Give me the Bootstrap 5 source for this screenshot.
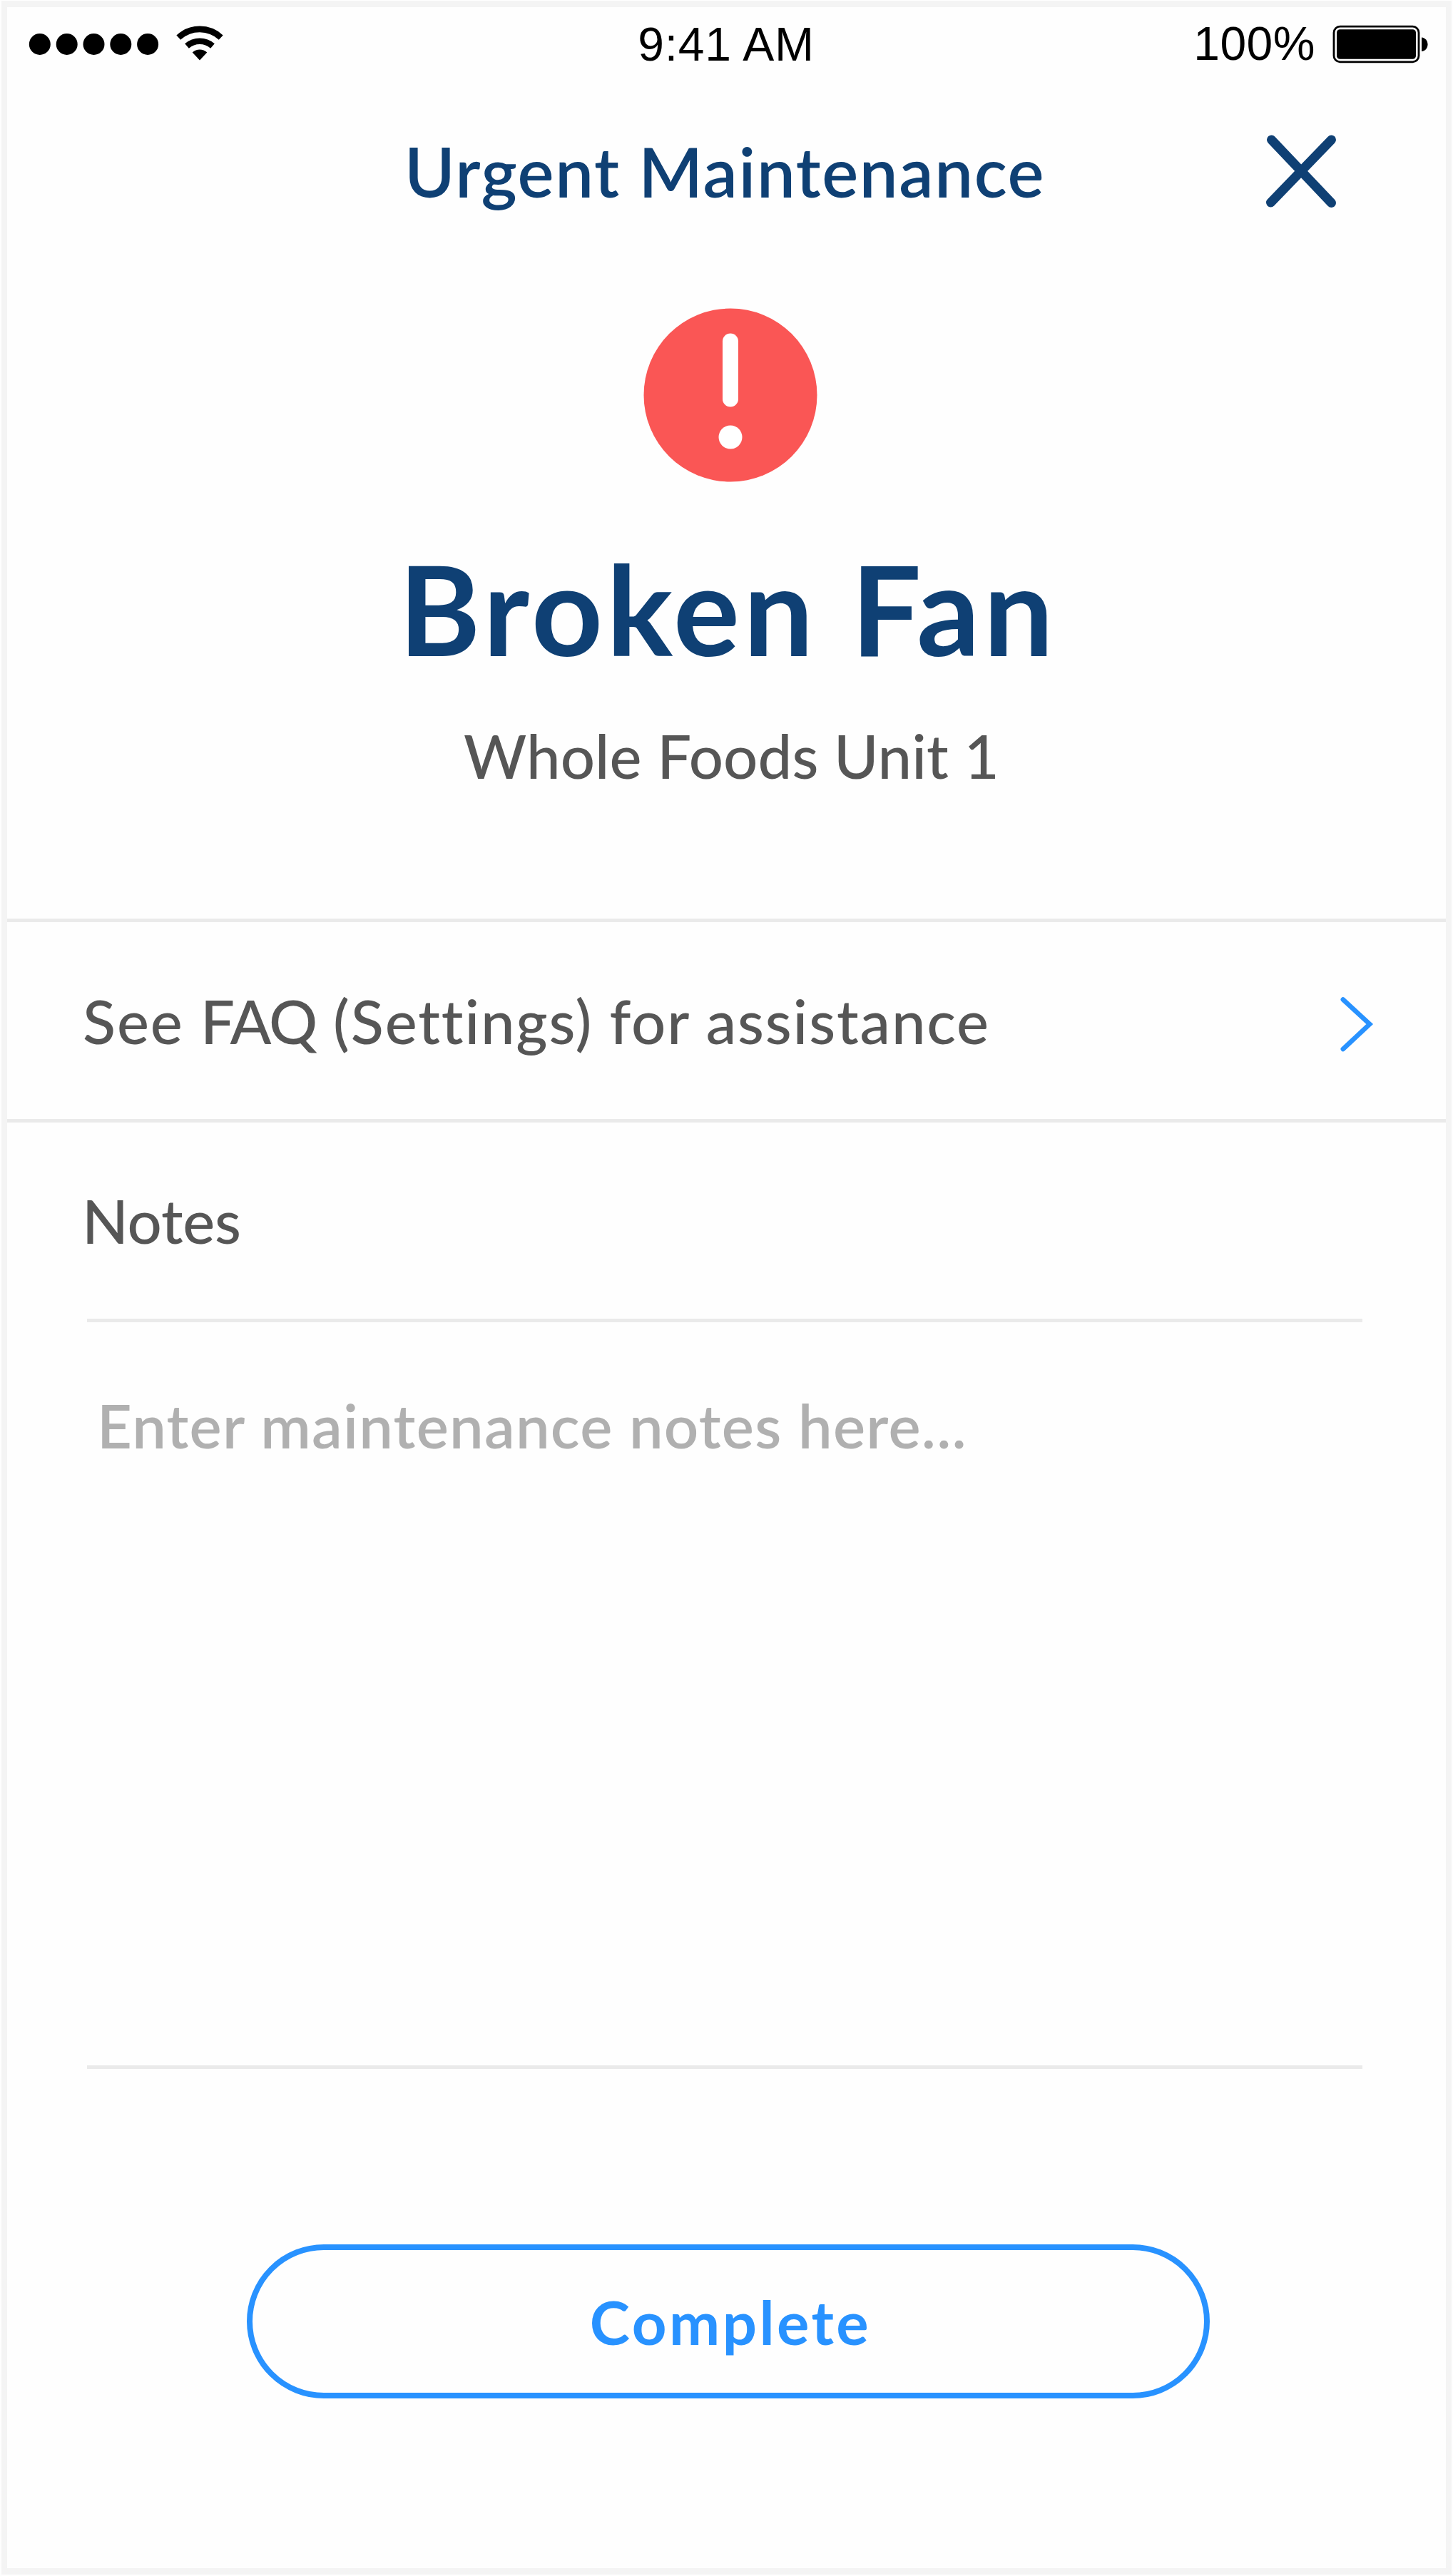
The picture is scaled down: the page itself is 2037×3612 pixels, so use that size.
<!DOCTYPE html>
<html lang="en">
<head>
<meta charset="utf-8">
<meta name="viewport" content="width=device-width, initial-scale=1">
<title>Urgent Maintenance</title>
<link href="https://cdn.jsdelivr.net/npm/bootstrap@5.3.0/dist/css/bootstrap.min.css" rel="stylesheet">
<style>
  :root { --navy: #0f4074; --blue: #2892ff; --ink: #565656; --rule: #eaeaea; }
  html, body { height: 3612px; overflow: hidden; }
  body { font-family: Lato, "Open Sans", sans-serif; font-weight: 500; background: #fefefe; padding: 1px 2px 2px; color: var(--ink); }
  .screen { height: 3609px; border: solid #f4f4f4; border-width: 9px 8px; }
  .status { height: 104px; font: 66px/104px "Liberation Sans", sans-serif; color: #000; padding: 0 25px 0 30px; }
  .status .col { flex: 1 1 0; }
  .clock { letter-spacing: .8px; margin-right: 6px; }
  .charge { letter-spacing: .5px; margin-top: -3px; }
  .titlebar { height: 250px; color: var(--navy); padding: 0 151px 0 557px; }
  .titlebar h1 { font-size: 96px; font-weight: 600; line-height: 120px; letter-spacing: 1.65px; padding-top: 1px; }
  .hero { height: 924px; padding-top: 68px; }
  .hero svg { margin-left: 892px; }
  .hero h2 { font-size: 174px; font-weight: 700; line-height: 210px; letter-spacing: 5.3px; color: var(--navy); margin-top: 72px; padding-left: 549px; }
  .hero p { font-size: 85px; line-height: 100px; letter-spacing: .1px; margin-top: 51px; padding-left: 640px; }
  .faq { height: 286px; border: solid var(--rule); border-width: 5px 0; font-size: 85px; line-height: 100px; letter-spacing: 1.85px; color: var(--ink); padding: 0 100px 0 106px; }
  .faq svg { margin-top: 10px; }
  .faq abbr { letter-spacing: -1.6px; text-decoration: none; }
  .notes { padding: 0 117px 0 112px; }
  .notes label { height: 275px; font-size: 85px; line-height: 275px; letter-spacing: -.2px; margin-left: -7px; }
  .notes textarea { height: 1052px; border: solid var(--rule); border-width: 5px 0; border-radius: 0; background: none; resize: none; padding: 94px 0 0 14px; font-size: 85px; line-height: 100px; font-weight: 600; letter-spacing: 1.25px; overflow: hidden; }
  .notes textarea::placeholder { color: #b0b0b0; opacity: 1; }
  .btn-complete { width: 1350px; height: 216px; margin: 246px 0 0 336px; border: 8px solid var(--blue); color: var(--blue); font-size: 85px; line-height: 100px; font-weight: 700; letter-spacing: 3.5px; padding: 0 0 0 6px; }
</style>
<script src="https://cdn.jsdelivr.net/npm/bootstrap@5.3.0/dist/js/bootstrap.bundle.min.js"></script>
</head>
<body>
<main class="screen d-flex flex-column">
  <header class="status d-flex align-items-center">
    <div class="col d-flex align-items-center">
      <svg width="290" height="60" viewBox="40 31 290 60">
        <circle cx="55.8" cy="61" r="15"/><circle cx="93.7" cy="61" r="15"/><circle cx="131.5" cy="61" r="15"/><circle cx="169.3" cy="61" r="15"/><circle cx="207.1" cy="61" r="15"/>
        <g fill="none" stroke="#000" stroke-width="8.6"><path d="M250.300 51.600A43.500 43.500 0 0 1 309.700 51.600"/><path d="M262 63.500A27.500 27.500 0 0 1 298 63.500"/></g>
        <path d="M269.700 72.500A15.500 15.500 0 0 1 290.300 72.500L280 83.600Z"/>
      </svg>
    </div>
    <div class="clock">9:41 AM</div>
    <div class="col d-flex align-items-center justify-content-end">
      <span class="charge">100%</span>
      <svg class="ms-4" width="134" height="54" viewBox="1868 34 134 54">
        <rect x="1870" y="36.200" width="119" height="49.600" rx="8.500" fill="none" stroke="#000" stroke-width="2.800"/>
        <rect x="1874" y="40.300" width="111" height="41.400" rx="4.500"/>
        <path d="M1993 51.500c5 .5 8.500 4.500 8.500 9.800s-3.500 9.300-8.500 9.800z"/>
      </svg>
    </div>
  </header>

  <section class="titlebar d-flex align-items-center justify-content-between">
    <h1 class="m-0 text-nowrap">Urgent Maintenance</h1>
    <svg width="104" height="104" viewBox="1773 187 104 104" role="img" aria-label="Close">
      <path d="M1783.500 196L1867.500 284.500M1867.500 196L1782.500 284" stroke="#0f4074" stroke-width="13" stroke-linecap="round"/>
    </svg>
  </section>

  <section class="hero">
    <svg class="d-block" width="244" height="244" viewBox="0 0 244 244">
      <circle cx="122" cy="122" r="121.500" fill="#fa5655"/>
      <rect x="111" y="35.500" width="22" height="103" rx="11" fill="#fff"/>
      <circle cx="122" cy="181" r="16.500" fill="#fff"/>
    </svg>
    <h2 class="mb-0 text-nowrap">Broken Fan</h2>
    <p class="mb-0 text-nowrap">Whole Foods Unit 1</p>
  </section>

  <a href="#" class="faq d-flex align-items-center justify-content-between text-decoration-none">
    <span>See <abbr>FAQ</abbr> (Settings) for assistance</span>
    <svg width="50" height="84" viewBox="1877 1394 50 84" fill="none" stroke="#2892ff" stroke-width="6.500" stroke-linecap="round">
      <path d="M1882.800 1401.500L1920.300 1436L1882.800 1471"/>
    </svg>
  </a>

  <section class="notes">
    <label for="notes" class="d-block">Notes</label>
    <textarea id="notes" class="form-control shadow-none" placeholder="Enter maintenance notes here..."></textarea>
  </section>

  <button type="button" class="btn btn-complete rounded-pill">Complete</button>
</main>
</body>
</html>
